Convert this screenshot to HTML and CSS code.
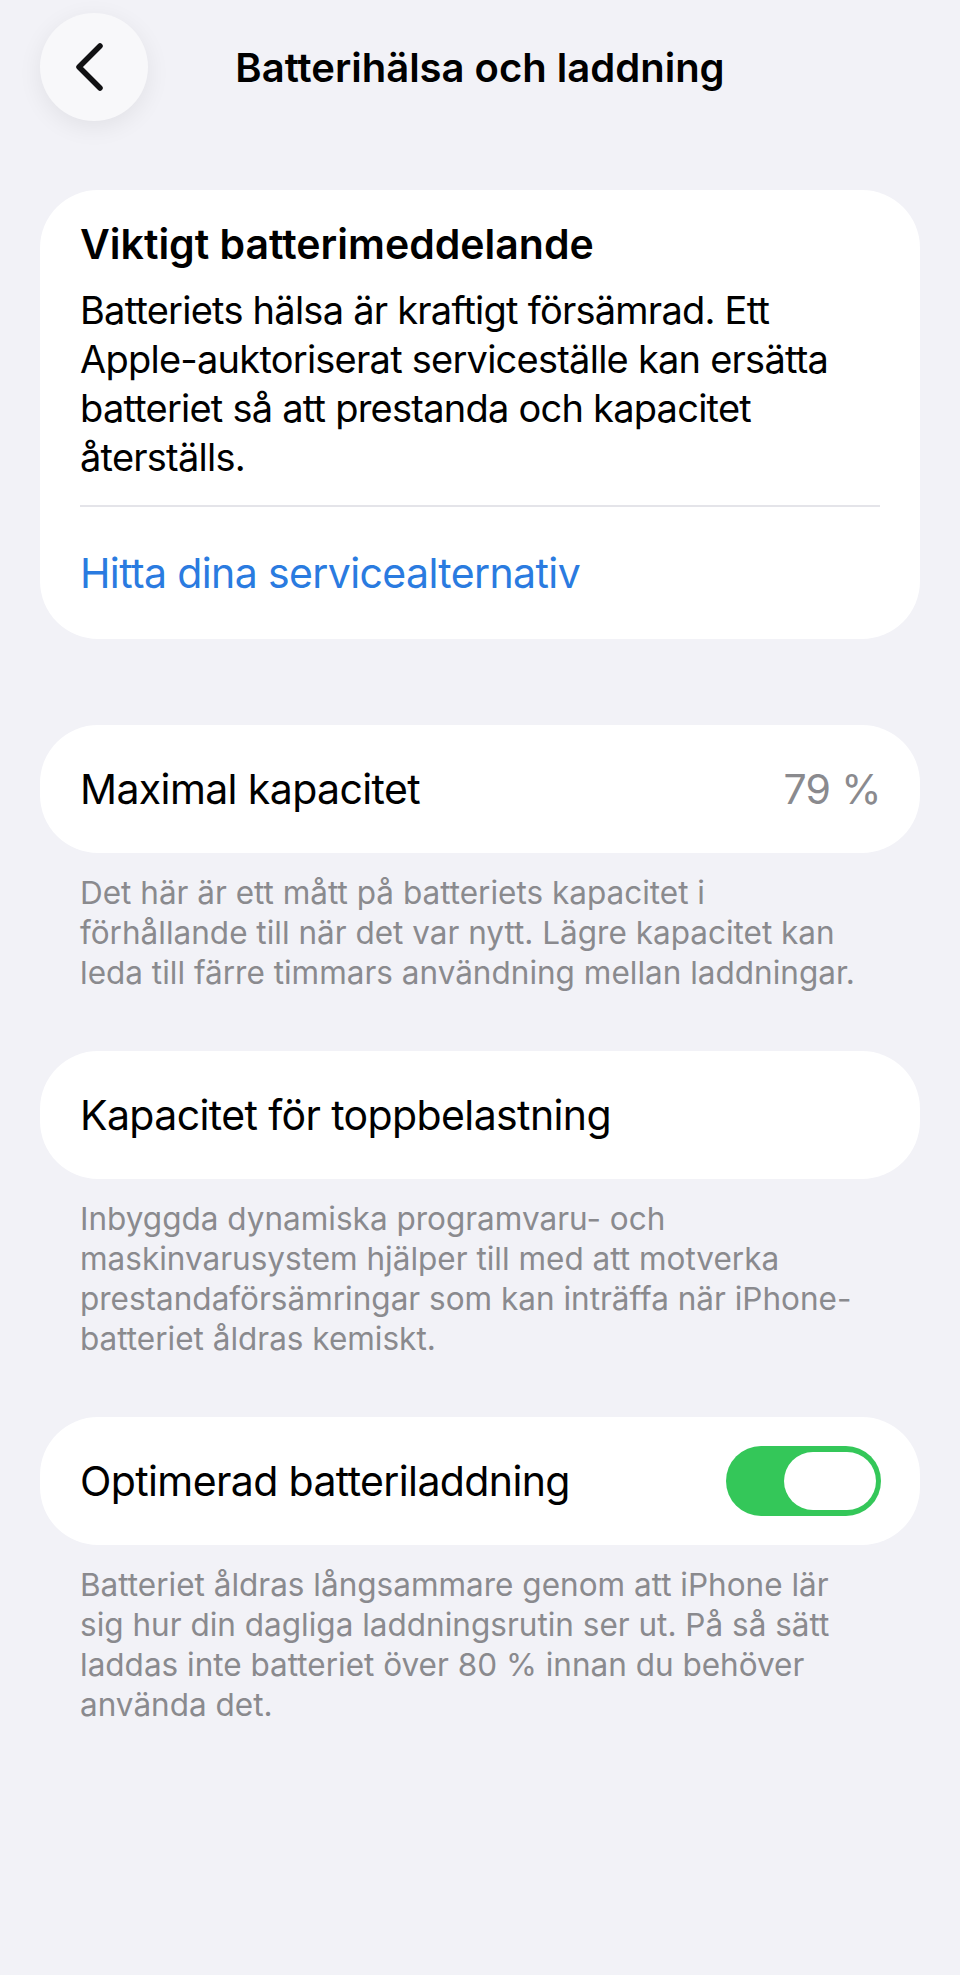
FILE: index.html
```html
<!DOCTYPE html>
<html lang="sv">
<head>
<meta charset="UTF-8">
<title>Batterihälsa och laddning</title>
<link rel="stylesheet" href="styles.css">
</head>
<body>

<header class="nav">
  <button class="back" aria-label="Tillbaka">
    <svg width="30" height="50" viewBox="0 0 30 50">
      <path d="M24 4 L3 25 L24 46" fill="none" stroke="#111113" stroke-width="5.5" stroke-linecap="round" stroke-linejoin="round"/>
    </svg>
  </button>
  <h1 class="nav-title">Batterihälsa och laddning</h1>
</header>

<main class="content">
  <section class="card notice">
    <h2 class="notice-title">Viktigt batterimeddelande</h2>
    <p class="notice-text">Batteriets hälsa är kraftigt försämrad. Ett<br>Apple-auktoriserat serviceställe kan ersätta<br>batteriet så att prestanda och kapacitet<br>återställs.</p>
    <div class="divider"></div>
    <a class="notice-link" href="#">Hitta dina servicealternativ</a>
  </section>

  <section class="group">
    <div class="card row">
      <span class="row-label">Maximal kapacitet</span>
      <span class="row-value">79 %</span>
    </div>
    <p class="footnote">Det här är ett mått på batteriets kapacitet i<br>förhållande till när det var nytt. Lägre kapacitet kan<br>leda till färre timmars användning mellan laddningar.</p>
  </section>

  <section class="group">
    <div class="card row">
      <span class="row-label">Kapacitet för toppbelastning</span>
    </div>
    <p class="footnote">Inbyggda dynamiska programvaru- och<br>maskinvarusystem hjälper till med att motverka<br>prestandaförsämringar som kan inträffa när iPhone-<br>batteriet åldras kemiskt.</p>
  </section>

  <section class="group">
    <div class="card row">
      <span class="row-label">Optimerad batteriladdning</span>
      <span class="toggle on"><span class="knob"></span></span>
    </div>
    <p class="footnote">Batteriet åldras långsammare genom att iPhone lär<br>sig hur din dagliga laddningsrutin ser ut. På så sätt<br>laddas inte batteriet över 80 % innan du behöver<br>använda det.</p>
  </section>
</main>

</body>
</html>
```

FILE: styles.css
```css
body {
  margin: 0;
  background: #f2f2f7;
  color: #000;
  font-family: Inter, 'Noto Sans', sans-serif;
  -webkit-font-smoothing: antialiased;
}

.nav {
  display: grid;
  grid-template-columns: 108px 1fr 108px;
  align-items: center;
  padding: 13px 40px 0;
}

.back {
  width: 108px;
  height: 108px;
  border: none;
  border-radius: 50%;
  background: #f8f8fa;
  box-shadow: 0 6px 24px rgba(0, 0, 0, 0.07);
  display: flex;
  align-items: center;
  justify-content: center;
  padding: 0 6px 0 0;
}

.nav-title {
  margin: 0;
  text-align: center;
  font-size: 40px;
  font-weight: 600;
}

.content {
  padding: 69px 40px 0;
}

.card {
  background: #fff;
  border-radius: 58px;
}

.notice {
  padding: 30px 40px 0;
}

.notice-title {
  margin: 0;
  font-size: 41px;
  line-height: 49px;
  font-weight: 600;
}

.notice-text {
  margin: 17px 0 0;
  font-size: 38px;
  line-height: 49px;
  letter-spacing: -0.02em;
}

.divider {
  height: 2px;
  background: #e4e4e9;
  margin-top: 23px;
}

.notice-link {
  display: block;
  padding: 42px 0 41px;
  font-size: 41px;
  line-height: 49px;
  color: #2a7be0;
  text-decoration: none;
  letter-spacing: -0.015em;
}

.group {
  margin-top: 86px;
}

.group + .group {
  margin-top: 58px;
}

.row {
  height: 128px;
  padding: 0 39px 0 40px;
  display: flex;
  align-items: center;
  justify-content: space-between;
  font-size: 41px;
  letter-spacing: -0.015em;
}

.row-value {
  color: #8a8a8e;
}

.toggle {
  width: 155px;
  height: 70px;
  border-radius: 35px;
  background: #e5e5ea;
  display: flex;
  align-items: center;
  padding: 0 5px;
  box-sizing: border-box;
}

.toggle.on {
  background: #34c759;
  justify-content: flex-end;
}

.knob {
  width: 92px;
  height: 58px;
  border-radius: 29px;
  background: #fff;
}

.footnote {
  margin: 0;
  padding: 20px 40px 0;
  font-size: 31.5px;
  line-height: 40px;
  color: #8a8a8e;
}
```
